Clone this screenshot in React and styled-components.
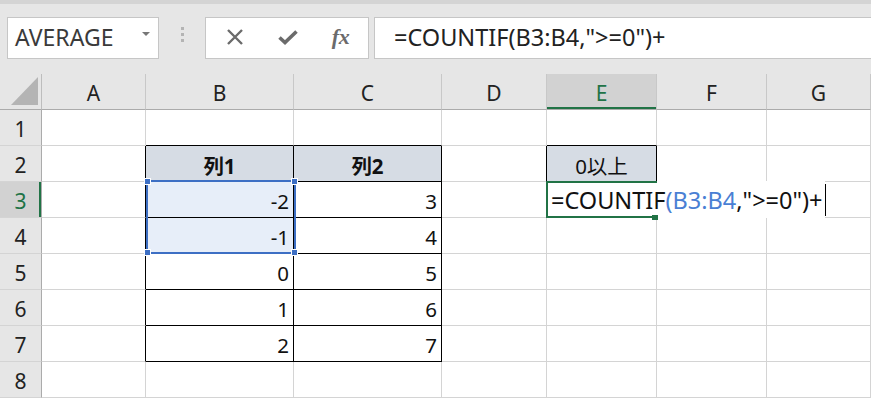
import React from 'react';
import styled, { createGlobalStyle } from 'styled-components';

const GlobalStyle = createGlobalStyle`
  html, body {
    margin: 0;
    padding: 0;
    background: #e6e6e6;
    overflow: hidden;
  }
  body {
    font-family: 'Noto Sans', 'Noto Sans CJK JP', sans-serif;
  }
`;

const GREEN = '#217346';
const BLUE = '#3d6fc4';
const GRID = '#d4d4d4';

const COLS = ['A', 'B', 'C', 'D', 'E', 'F', 'G'];

const DATA = {
  B2: { text: '列1', head: true, bold: true },
  C2: { text: '列2', head: true, bold: true },
  E2: { text: '0以上', head: true },
  B3: { text: '-2', num: true, sel: true },
  C3: { text: '3', num: true },
  B4: { text: '-1', num: true, sel: true },
  C4: { text: '4', num: true },
  B5: { text: '0', num: true },
  C5: { text: '5', num: true },
  B6: { text: '1', num: true },
  C6: { text: '6', num: true },
  B7: { text: '2', num: true },
  C7: { text: '7', num: true },
};

// black table borders: B2:C7 and E2
function rightBlack(col, row) {
  if (['A', 'B', 'C'].includes(col) && row >= 2 && row <= 7) return true;
  if (['D', 'E'].includes(col) && row === 2) return true;
  return false;
}

function bottomBlack(col, row) {
  if (['B', 'C'].includes(col) && row >= 1 && row <= 7) return true;
  if (col === 'E' && row >= 1 && row <= 2) return true;
  return false;
}

export default function App() {
  const rows = [1, 2, 3, 4, 5, 6, 7, 8];
  return (
    <>
      <GlobalStyle />
      <Window>
        <Toolbar>
          <NameBox>
            <span>AVERAGE</span>
            <DropArrow />
          </NameBox>
          <Grip>
            <i />
            <i />
            <i />
          </Grip>
          <FxButtons>
            <FxSlot>
              <svg width='18' height='18' viewBox='0 0 18 18'>
                <path d='M2 2 L16 16 M16 2 L2 16' stroke='#6b6b6b' strokeWidth='2.4' fill='none' />
              </svg>
            </FxSlot>
            <FxSlot>
              <svg width='20' height='16' viewBox='0 0 20 16'>
                <path d='M1.5 8.5 L7 13.5 L18.5 2.5' stroke='#6b6b6b' strokeWidth='3.6' fill='none' />
              </svg>
            </FxSlot>
            <FxSlot>
              <FxLabel>fx</FxLabel>
            </FxSlot>
          </FxButtons>
          <FormulaInput>=COUNTIF(B3:B4,"&gt;=0")+</FormulaInput>
        </Toolbar>

        <Sheet>
          <Corner>
            <i />
          </Corner>
          {COLS.map((c) => (
            <ColHead key={c} $active={c === 'E'}>
              {c}
            </ColHead>
          ))}
          {rows.map((r) => (
            <React.Fragment key={r}>
              <RowHead $active={r === 3}>{r}</RowHead>
              {COLS.map((c) => {
                const d = DATA[c + r] || {};
                return (
                  <Cell
                    key={c + r}
                    $rightBlack={rightBlack(c, r)}
                    $bottomBlack={bottomBlack(c, r)}
                    $head={d.head}
                    $sel={d.sel}
                    $num={d.num}
                    $bold={d.bold}
                  >
                    {d.text}
                    {c === 'B' && r === 3 && (
                      <RangeFrame>
                        <Handle $pos='tl' />
                        <Handle $pos='tr' />
                        <Handle $pos='bl' />
                        <Handle $pos='br' />
                      </RangeFrame>
                    )}
                    {c === 'E' && r === 3 && (
                      <EditBox>
                        <EditText>
                          =COUNTIF<Ref>(B3:B4</Ref>,"&gt;=0")+
                        </EditText>
                        <Caret />
                        <ActiveFrame />
                        <FillHandle />
                      </EditBox>
                    )}
                  </Cell>
                );
              })}
            </React.Fragment>
          ))}
        </Sheet>
      </Window>
    </>
  );
}

const Window = styled.div`
  width: 871px;
  height: 398px;
  overflow: hidden;
  background: #e6e6e6;
  border-top: 4px solid #d4d4d4;
  box-sizing: border-box;
`;

const Toolbar = styled.div`
  display: flex;
  align-items: center;
  height: 70px;
  padding: 13px 0 16px 7px;
  box-sizing: border-box;
  color: #333;
`;

const NameBox = styled.div`
  display: flex;
  align-items: center;
  justify-content: space-between;
  width: 152px;
  height: 42px;
  box-sizing: border-box;
  padding: 0 8px 2px 7px;
  background: #fff;
  border: 1px solid #c6c6c6;
  font-size: 23px;
  color: #3a3a3a;
`;

const DropArrow = styled.i`
  width: 0;
  height: 0;
  border-left: 4px solid transparent;
  border-right: 4px solid transparent;
  border-top: 4px solid #777;
  margin-bottom: 6px;
`;

const Grip = styled.div`
  width: 46px;
  display: flex;
  flex-direction: column;
  align-items: center;
  gap: 3px;
  margin-bottom: 6px;

  i {
    width: 3px;
    height: 3px;
    background: #b4b4b4;
  }
`;

const FxButtons = styled.div`
  display: flex;
  align-items: center;
  width: 164px;
  height: 42px;
  box-sizing: border-box;
  padding-left: 2px;
  background: #fff;
  border: 1px solid #c6c6c6;
`;

const FxSlot = styled.div`
  width: 53px;
  display: flex;
  justify-content: center;
  align-items: center;
  margin-bottom: 2px;
`;

const FxLabel = styled.span`
  font-family: 'Liberation Serif', serif;
  font-style: italic;
  font-weight: 700;
  font-size: 22px;
  color: #6b6b6b;
  letter-spacing: -0.5px;
`;

const FormulaInput = styled.div`
  flex: 1;
  margin-left: 5px;
  height: 42px;
  box-sizing: border-box;
  display: flex;
  align-items: center;
  padding: 0 0 2px 19px;
  background: #fff;
  border: 1px solid #c6c6c6;
  border-right: none;
  font-size: 23.5px;
  color: #222;
  white-space: nowrap;
`;

const Sheet = styled.div`
  display: grid;
  grid-template-columns: 42px 104px 148px 148px 105px 110px 110px 1fr;
  grid-auto-rows: 36px;
  background: #fff;
`;

const Corner = styled.div`
  display: flex;
  align-items: flex-end;
  justify-content: flex-end;
  padding: 0 3px 4px 0;
  background: #e6e6e6;
  border-right: 1px solid #bdbdbd;
  border-bottom: 1px solid #ababab;

  i {
    width: 0;
    height: 0;
    border-left: 27px solid transparent;
    border-bottom: 28px solid #b4b4b4;
  }
`;

const ColHead = styled.div`
  display: flex;
  align-items: center;
  justify-content: center;
  padding-top: 2px;
  background: ${(p) => (p.$active ? '#d2d2d2' : '#e6e6e6')};
  color: ${(p) => (p.$active ? GREEN : '#222')};
  border-right: 1px solid #c8c8c8;
  border-bottom: 1px solid #ababab;
  box-shadow: ${(p) => (p.$active ? `inset 0 -2px 0 ${GREEN}` : 'none')};
  font-size: 21px;
`;

const RowHead = styled.div`
  display: flex;
  align-items: center;
  justify-content: center;
  padding-top: 2px;
  background: ${(p) => (p.$active ? '#d2d2d2' : '#e6e6e6')};
  color: ${(p) => (p.$active ? GREEN : '#222')};
  border-right: 1px solid #ababab;
  border-bottom: 1px solid ${GRID};
  box-shadow: ${(p) => (p.$active ? `inset -2px 0 0 ${GREEN}` : 'none')};
  font-size: 21px;
`;

const Cell = styled.div`
  position: relative;
  display: flex;
  align-items: center;
  justify-content: ${(p) => (p.$num ? 'flex-end' : 'center')};
  padding: 3px ${(p) => (p.$num ? '4px' : '0')} 0 0;
  background: ${(p) => (p.$sel ? '#e7eef9' : p.$head ? '#d6dce4' : '#fff')};
  border-right: 1px solid ${(p) => (p.$rightBlack ? '#000' : GRID)};
  border-bottom: 1px solid ${(p) => (p.$bottomBlack ? '#000' : GRID)};
  font-size: 20.5px;
  font-weight: ${(p) => (p.$bold ? 700 : 400)};
  color: #111;
  white-space: nowrap;
`;

const RangeFrame = styled.div`
  position: absolute;
  left: 0;
  top: -2px;
  width: 150px;
  height: 74px;
  box-sizing: border-box;
  border: 2px solid ${BLUE};
  pointer-events: none;
  z-index: 3;
`;

const Handle = styled.i`
  position: absolute;
  width: 5px;
  height: 5px;
  background: ${BLUE};
  border: 1px solid #fff;
  ${(p) => (p.$pos[0] === 't' ? 'top: -4px;' : 'bottom: -4px;')}
  ${(p) => (p.$pos[1] === 'l' ? 'left: -4px;' : 'right: -4px;')}
`;

const EditBox = styled.div`
  position: absolute;
  left: -1px;
  top: -1px;
  height: 37px;
  display: flex;
  align-items: stretch;
  z-index: 2;
`;

const EditText = styled.div`
  display: flex;
  align-items: center;
  padding: 1px 2px 0 5px;
  background: #fff;
  font-size: 23.5px;
  font-weight: 400;
  color: #111;
`;

const Ref = styled.span`
  color: #4a7fd4;
`;

const Caret = styled.i`
  width: 1px;
  margin: 3px 0 2px;
  background: #000;
`;

const ActiveFrame = styled.div`
  position: absolute;
  left: 0;
  top: 0;
  width: 111px;
  height: 37px;
  box-sizing: border-box;
  border: 2px solid ${GREEN};
  border-right: none;
`;

const FillHandle = styled.i`
  position: absolute;
  left: 106px;
  top: 34px;
  width: 6px;
  height: 5px;
  background: ${GREEN};
`;
